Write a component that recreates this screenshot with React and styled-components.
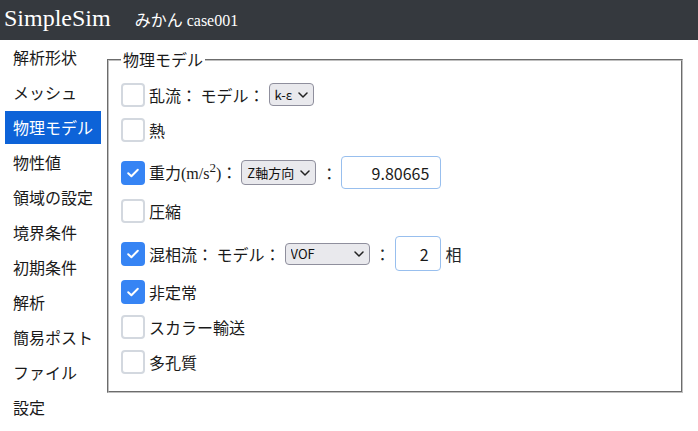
import React, { useState } from "react";
import styled, { createGlobalStyle } from "styled-components";

const GlobalStyle = createGlobalStyle`
  body {
    margin: 0;
    background: #fff;
    color: #212529;
    font-family: "Noto Sans CJK JP", "Noto Sans", sans-serif;
    font-size: 16px;
  }
`;

const menu = [
  "解析形状",
  "メッシュ",
  "物理モデル",
  "物性値",
  "領域の設定",
  "境界条件",
  "初期条件",
  "解析",
  "簡易ポスト",
  "ファイル",
  "設定",
];

function Check({ checked, onChange }) {
  return (
    <Box $checked={checked} onClick={onChange}>
      {checked && (
        <svg width="16" height="16" viewBox="0 0 16 16">
          <path
            d="M3.2 8.2 L6.4 11.2 L12.8 4.8"
            fill="none"
            stroke="#fff"
            strokeWidth="2"
            strokeLinecap="round"
            strokeLinejoin="round"
          />
        </svg>
      )}
    </Box>
  );
}

function Select({ w, h, value, options }) {
  return (
    <SelectWrap $w={w} $h={h}>
      <SelectBox defaultValue={value}>
        {options.map((o) => (
          <option key={o}>{o}</option>
        ))}
      </SelectBox>
      <Chevron width="10" height="6" viewBox="0 0 10 6">
        <path
          d="M1 1 L5 5 L9 1"
          fill="none"
          stroke="#222"
          strokeWidth="1.5"
          strokeLinecap="round"
          strokeLinejoin="round"
        />
      </Chevron>
    </SelectWrap>
  );
}

export default function App() {
  const [flags, setFlags] = useState({
    turb: false,
    heat: false,
    grav: true,
    comp: false,
    multi: true,
    unsteady: true,
    scalar: false,
    porous: false,
  });
  const toggle = (k) => () => setFlags({ ...flags, [k]: !flags[k] });

  return (
    <>
      <GlobalStyle />
      <Header>
        <Brand>SimpleSim</Brand>
        <Project>みかん case001</Project>
      </Header>
      <Body>
        <Sidebar>
          {menu.map((m) => (
            <NavItem key={m} $active={m === "物理モデル"}>
              {m}
            </NavItem>
          ))}
        </Sidebar>
        <Main>
          <Fieldset>
            <Legend>物理モデル</Legend>

            <Row>
              <Check checked={flags.turb} onChange={toggle("turb")} />
              <Label>乱流： モデル：</Label>
              <Select w={45} h={23} value="k-ε" options={["k-ε", "k-ω"]} />
            </Row>

            <Row>
              <Check checked={flags.heat} onChange={toggle("heat")} />
              <Label>熱</Label>
            </Row>

            <Row $tall>
              <Check checked={flags.grav} onChange={toggle("grav")} />
              <Label>
                重力
                <Unit>
                  (m/s<sup>2</sup>)
                </Unit>
                ：
              </Label>
              <Select
                w={75}
                h={25}
                value="Z軸方向"
                options={["X軸方向", "Y軸方向", "Z軸方向"]}
              />
              <Sep>：</Sep>
              <NumInput $w={100} $h={33} defaultValue="9.80665" />
            </Row>

            <Row>
              <Check checked={flags.comp} onChange={toggle("comp")} />
              <Label>圧縮</Label>
            </Row>

            <Row $tall>
              <Check checked={flags.multi} onChange={toggle("multi")} />
              <Label>混相流： モデル：</Label>
              <Select w={85} h={22} value="VOF" options={["VOF"]} />
              <Sep>：</Sep>
              <NumInput $w={46} $h={35} defaultValue="2" />
              <After>相</After>
            </Row>

            <Row>
              <Check checked={flags.unsteady} onChange={toggle("unsteady")} />
              <Label>非定常</Label>
            </Row>

            <Row>
              <Check checked={flags.scalar} onChange={toggle("scalar")} />
              <Label>スカラー輸送</Label>
            </Row>

            <Row>
              <Check checked={flags.porous} onChange={toggle("porous")} />
              <Label>多孔質</Label>
            </Row>
          </Fieldset>
        </Main>
      </Body>
    </>
  );
}

const Header = styled.header`
  height: 40px;
  box-sizing: border-box;
  background: #35393e;
  color: #fff;
  display: flex;
  align-items: baseline;
  padding: 6px 0 0 4px;
  font-family: "Liberation Serif", "Noto Sans CJK JP", serif;
`;

const Brand = styled.div`
  font-size: 24px;
  line-height: 1;
`;

const Project = styled.div`
  font-size: 16px;
  line-height: 1;
  margin-left: 24px;
`;

const Body = styled.div`
  display: flex;
  align-items: flex-start;
`;

const Sidebar = styled.nav`
  width: 96px;
  padding: 1px 0 0 5px;
  display: flex;
  flex-direction: column;
  gap: 2px;
`;

const NavItem = styled.div`
  height: 33px;
  display: flex;
  align-items: center;
  padding: 0 0 2px 8px;
  box-sizing: border-box;
  white-space: nowrap;
  font-size: 16px;
  color: ${(p) => (p.$active ? "#fff" : "#1a1a1a")};
  background: ${(p) => (p.$active ? "#0d63d8" : "transparent")};
`;

const Main = styled.main`
  flex: 1;
  padding: 9px 15px 0 6px;
`;

const Fieldset = styled.fieldset`
  margin: 0;
  border: 2px groove #c0c0c0;
  padding: 7px 12px 12px 12px;
`;

const Legend = styled.legend`
  padding: 0 2px;
  font-size: 16px;
  line-height: 21px;
  color: #1a1a1a;
`;

const Row = styled.div`
  display: flex;
  align-items: center;
  height: 35px;
  padding: ${(p) => (p.$tall ? "8px 0 3px" : "0")};
`;

const Box = styled.span`
  width: 24px;
  height: 24px;
  box-sizing: border-box;
  border-radius: 4px;
  border: ${(p) => (p.$checked ? "none" : "2px solid #d3d8df")};
  background: ${(p) => (p.$checked ? "#3684f4" : "#fff")};
  display: flex;
  align-items: center;
  justify-content: center;
  flex-shrink: 0;
  cursor: pointer;
`;

const Label = styled.span`
  margin-left: 4px;
  font-size: 16px;
  line-height: 24px;
  white-space: pre;
  color: #1a1a1a;
  display: flex;
  align-items: baseline;
`;

const Unit = styled.span`
  font-family: "Liberation Serif", serif;
  sup {
    font-size: 13px;
    line-height: 0;
    vertical-align: 7px;
  }
`;

const SelectWrap = styled.span`
  position: relative;
  margin-left: 4px;
  width: ${(p) => p.$w}px;
  height: ${(p) => p.$h}px;
  display: inline-flex;
`;

const SelectBox = styled.select`
  appearance: none;
  width: 100%;
  height: 100%;
  box-sizing: border-box;
  border: 1px solid #8f8f9d;
  border-radius: 4px;
  background: #e9e9ed;
  color: #111;
  font-family: "Noto Sans CJK JP", "Noto Sans", sans-serif;
  font-size: 13px;
  padding: 0 0 0 5px;
  outline: none;
`;

const Chevron = styled.svg`
  position: absolute;
  right: 6px;
  top: 50%;
  margin-top: -3px;
  pointer-events: none;
`;

const Sep = styled.span`
  margin: 0 4px 0 5px;
  font-size: 16px;
`;

const NumInput = styled.input`
  width: ${(p) => p.$w}px;
  height: ${(p) => p.$h}px;
  box-sizing: border-box;
  border: 1px solid #98bfee;
  border-radius: 4px;
  text-align: right;
  padding: 0 11px 0 4px;
  font-family: "Noto Sans CJK JP", "Noto Sans", sans-serif;
  font-size: 16px;
  color: #1a1a1a;
  outline: none;
`;

const After = styled.span`
  margin-left: 5px;
  font-size: 16px;
`;
